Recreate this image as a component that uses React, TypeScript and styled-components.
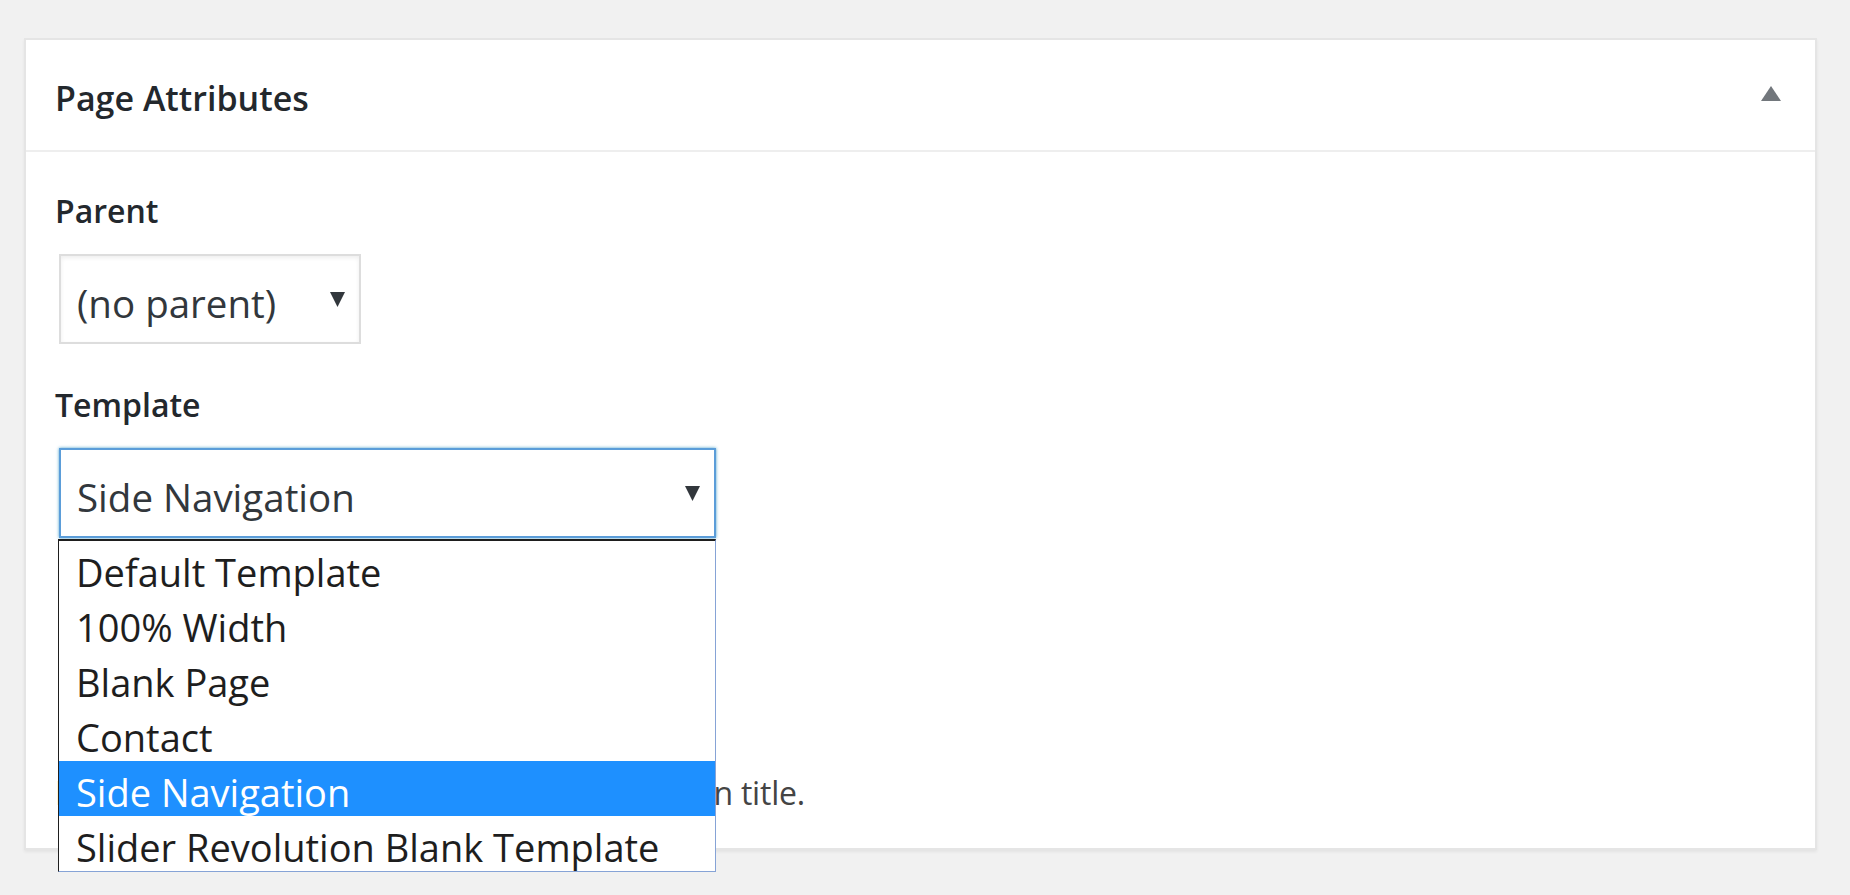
import React from "react";
import styled, { createGlobalStyle } from "styled-components";

const GlobalStyle = createGlobalStyle`
html, body {
    margin: 0;
    padding: 0;
    min-height: 100%;
    background: #f1f1f1;
    font-family: "Open Sans", "Noto Sans", sans-serif;
}
`

const templates = [
    "Default Template",
    "100% Width",
    "Blank Page",
    "Contact",
    "Side Navigation",
    "Slider Revolution Blank Template",
];

const Arrow = () => (
    <ArrowIcon width="15" height="15" viewBox="0 0 15 15">
        <polygon points="0,0 15,0 7.5,15" fill="#32373c" />
    </ArrowIcon>
);

export default function App() {
    const selected = "Side Navigation";
    return (
        <>
            <GlobalStyle />
            <Page>
                <Card>
                    <Header>
                        <Title>Page Attributes</Title>
                        <Toggle width="20" height="15" viewBox="0 0 20 15">
                            <polygon points="10,0 20,15 0,15" fill="#72777c" />
                        </Toggle>
                    </Header>
                    <Body>
                        <Label>Parent</Label>
                        <Select width={302}>
                            <SelectValue>(no parent)</SelectValue>
                            <Arrow />
                        </Select>

                        <Label spaced>Template</Label>
                        <Field>
                            <Select width={657} focused>
                                <SelectValue>{selected}</SelectValue>
                                <Arrow />
                            </Select>
                            <OptionList>
                                {templates.map((t) => (
                                    <Option key={t} active={t === selected}>{t}</Option>
                                ))}
                            </OptionList>
                        </Field>

                        <Help>Need help? Use the Help tab above the screen title.</Help>
                    </Body>
                </Card>
            </Page>
        </>
    );
}

const Page = styled.div`
padding: 38px 33px 40px 24px;
`

const Card = styled.div`
background: #fff;
border: 2px solid #e5e5e5;
box-shadow: 0 2px 3px rgba(0, 0, 0, 0.06);
`

const Header = styled.div`
height: 110px;
display: flex;
align-items: center;
justify-content: space-between;
padding: 0 34px 0 29px;
border-bottom: 2px solid #eee;
`

const Title = styled.h2`
margin: 0;
padding-top: 7px;
font-size: 34px;
font-weight: 600;
line-height: 1.4;
color: #23282d;
`

const Toggle = styled.svg`
display: block;
margin-bottom: 4px;
`

const Body = styled.div`
padding: 36px 29px 31px;
`

const Label = styled.p<{ spaced?: boolean }>`
margin: ${(p) => (p.spaced ? "38px" : "0")} 0 21px;
font-size: 32px;
font-weight: 600;
line-height: 45px;
color: #23282d;
`

const Field = styled.div`
position: relative;
`

const Select = styled.div<{ width: number; focused?: boolean }>`
box-sizing: border-box;
width: ${(p) => p.width}px;
height: 90px;
margin-left: 4px;
display: flex;
align-items: center;
justify-content: space-between;
padding: 0 14px 0 16px;
background: #fff;
border: 2px solid ${(p) => (p.focused ? "#5b9dd9" : "#ddd")};
box-shadow: ${(p) =>
        p.focused ? "0 0 3px rgba(30, 140, 190, 0.8)" : "inset 0 2px 4px rgba(0, 0, 0, 0.07)"};
`

const SelectValue = styled.span`
padding-top: 7px;
font-size: 38.5px;
color: #32373c;
white-space: nowrap;
`

const ArrowIcon = styled.svg`
display: block;
flex-shrink: 0;
`

const OptionList = styled.ul`
position: absolute;
top: 91px;
left: 3px;
z-index: 2;
box-sizing: border-box;
width: 658px;
margin: 0;
padding: 0;
list-style: none;
background: #fff;
border-top: 2px solid #1e1e1e;
border-left: 1px solid #1e1e1e;
border-right: 1px solid #86a3d6;
border-bottom: 1px solid #86a3d6;
`

const Option = styled.li<{ active?: boolean }>`
box-sizing: border-box;
height: 55px;
padding: 7px 0 0 17px;
font-size: 38px;
line-height: 48px;
white-space: nowrap;
color: ${(p) => (p.active ? "#fff" : "#1e1e1e")};
background: ${(p) => (p.active ? "#1e90ff" : "transparent")};
`

const Help = styled.p`
margin: 231px 0 0;
font-size: 32px;
line-height: 48px;
letter-spacing: -0.22px;
color: #444;
`
